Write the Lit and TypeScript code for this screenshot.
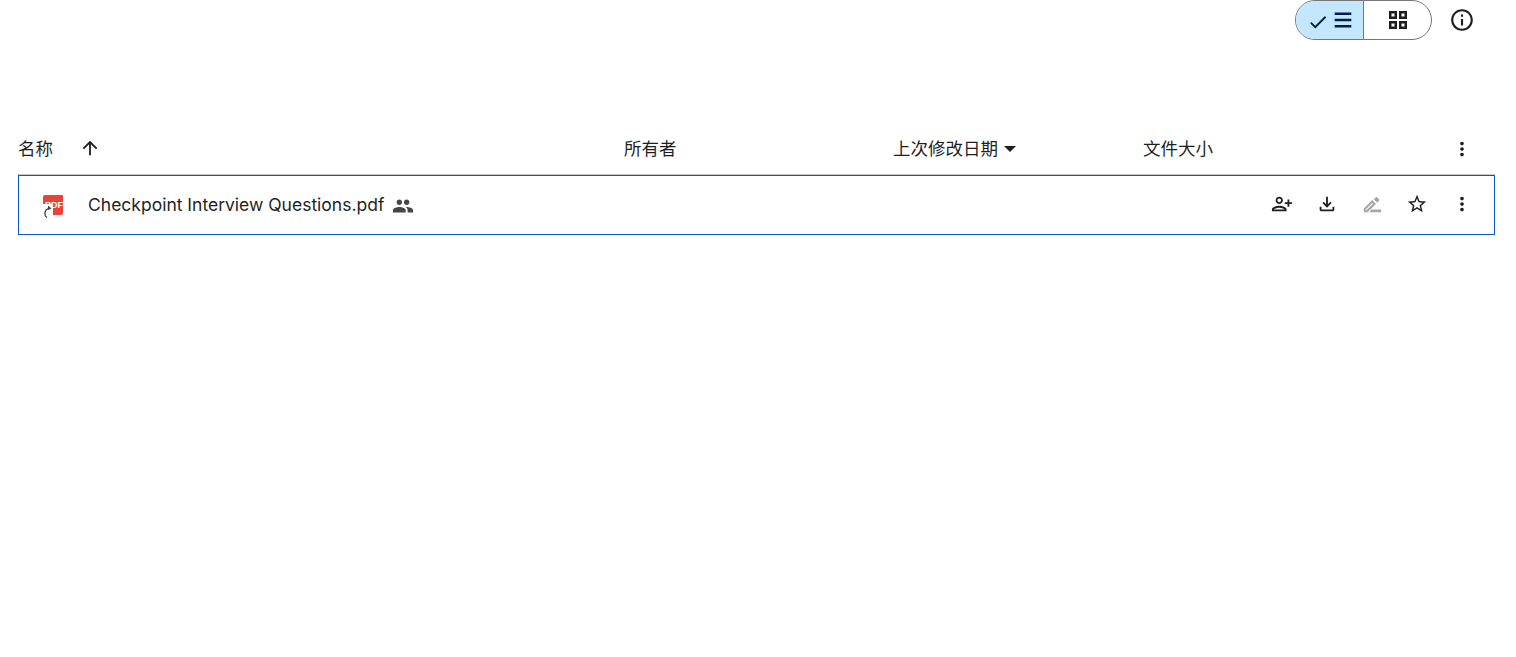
import { LitElement, html, css, svg } from "lit";
import { customElement } from "lit/decorators.js";

const P = {
  check: "M9 16.17L4.83 12l-1.42 1.41L9 19 21 7l-1.41-1.41z",
  grid: "M3 3h8v8H3zm2.500 2.500v3h3v-3zM13 3h8v8h-8zm2.500 2.500v3h3v-3zM3 13h8v8H3zm2.500 2.500v3h3v-3zM13 13h8v8h-8zm2.500 2.500v3h3v-3z",
  info: "M11 7h2v2h-2zm0 4h2v6h-2zm1-9C6.48 2 2 6.48 2 12s4.48 10 10 10 10-4.48 10-10S17.52 2 12 2zm0 18c-4.41 0-8-3.59-8-8s3.59-8 8-8 8 3.59 8 8-3.59 8-8 8z",
  up: "M4 12l1.41 1.41L11 7.83V20h2V7.83l5.58 5.59L20 12l-8-8-8 8z",
  more: "M12 8c1.1 0 2-.9 2-2s-.9-2-2-2-2 .9-2 2 .9 2 2 2zm0 2c-1.1 0-2 .9-2 2s.9 2 2 2 2-.9 2-2-.9-2-2-2zm0 6c-1.1 0-2 .9-2 2s.9 2 2 2 2-.9 2-2-.9-2-2-2z",
  people: "M16 11c1.66 0 2.99-1.34 2.99-3S17.66 5 16 5c-1.66 0-3 1.34-3 3s1.34 3 3 3zm-8 0c1.66 0 2.99-1.34 2.99-3S9.66 5 8 5C6.34 5 5 6.34 5 8s1.34 3 3 3zm0 2c-2.33 0-7 1.17-7 3.5V19h14v-2.5c0-2.33-4.67-3.5-7-3.5zm8 0c-.29 0-.62.02-.97.05 1.16.84 1.97 1.97 1.97 3.45V19h6v-2.5c0-2.33-4.67-3.5-7-3.5z",
  add: "M15 12c2.21 0 4-1.79 4-4s-1.79-4-4-4-4 1.79-4 4 1.79 4 4 4zm0-6c1.1 0 2 .9 2 2s-.9 2-2 2-2-.9-2-2 .9-2 2-2zm0 8c-2.67 0-8 1.34-8 4v2h16v-2c0-2.66-5.33-4-8-4zm-6 4c.22-.72 3.31-2 6-2 2.7 0 5.8 1.29 6 2H9zm-3-3v-3h3v-2H6V7H4v3H1v2h3v3h2z",
  download: "M18 15v3H6v-3H4v3c0 1.1.9 2 2 2h12c1.1 0 2-.9 2-2v-3h-2zm-1-4l-1.41-1.41L13 12.17V4h-2v8.17L8.41 9.59 7 11l5 5 5-5z",
  edit: "M3 16.800V21h4.200L16.300 11.900l-4.200-4.200L3 16.800zM5.800 18.800H5.200v-.9l6.900-6.900.9.9-7.200 6.900zM17.700 10.500l1.800-1.800a1.500 1.500 0 000-2.100l-1.600-1.600a1.500 1.500 0 00-2.100 0l-1.800 1.800zM11.500 18H22v3H9z",
  star: "M22 9.24l-7.19-.62L12 2 9.19 8.63 2 9.24l5.46 4.73L5.82 21 12 17.27 18.18 21l-1.63-7.03L22 9.24zM12 15.4l-3.76 2.27 1-4.28-3.32-2.88 4.38-.38L12 6.1l1.71 4.04 4.38.38-3.32 2.88 1 4.28L12 15.4z",
  menu: "M2 3h20v3H2zM2 10.500h20v3H2zM2 18h20v3H2z",
};

const icon = (d: string, size: number, cls = "") =>
  html`<svg class=${cls} width=${size} height=${size} viewBox="0 0 24 24" fill="currentColor">${svg`<path d=${d}></path>`}</svg>`;

@customElement("app-root")
export class AppRoot extends LitElement {
  static styles = css`
    :host {
      display: block;
      width: 1516px;
      height: 657px;
      background: #fff;
      color: #1f1f1f;
      font-family: Inter, "Noto Sans CJK SC", sans-serif;
      overflow: hidden;
    }
    .toolbar {
      display: flex;
      justify-content: flex-end;
      align-items: flex-start;
      height: 126px;
      padding-right: 41px;
      box-sizing: border-box;
    }
    .seg {
      display: flex;
      width: 137px;
      height: 40px;
      box-sizing: border-box;
      border: 1px solid #747775;
      border-radius: 20px;
      overflow: hidden;
    }
    .seg div {
      display: flex;
      align-items: center;
      justify-content: center;
      color: #041e49;
    }
    .seg .on {
      width: 68px;
      gap: 4px;
      box-sizing: border-box;
      background: #c2e7ff;
      border-right: 1px solid #747775;
    }
    .seg .off {
      flex: 1;
      color: #1f1f1f;
    }
    .tick {
      margin-top: 4px;
    }
    .info {
      margin-left: 17px;
      width: 26px;
      height: 26px;
      margin-top: 7px;
    }
    .head {
      display: grid;
      grid-template-columns: 606px 269px 250px 1fr auto;
      align-items: center;
      margin: 0 21px 0 18px;
      height: 49px;
      font-size: 17.500px;
      font-weight: 400;
      border-bottom: 1px solid #c7c7c7;
      padding: 0 22px 5px 0;
      box-sizing: border-box;
    }
    .cell {
      display: flex;
      align-items: center;
    }
    .sort {
      margin-left: 26px;
    }
    .caret {
      margin-left: 6px;
      margin-top: 2px;
      width: 0;
      height: 0;
      border-left: 6.500px solid transparent;
      border-right: 6.500px solid transparent;
      border-top: 6.500px solid #1f1f1f;
    }
    .headmore {
      margin-top: 2px;
    }
    .row {
      display: flex;
      align-items: center;
      margin: 0 21px 0 18px;
      height: 60px;
      box-sizing: border-box;
      border: 1px solid #0b57d0;
      padding: 0 21px 2px 23px;
    }
    .file {
      flex: 1;
      display: flex;
      align-items: center;
    }
    .name {
      margin-left: 24px;
      font-size: 17.500px;
      font-weight: 400;
    }
    .shared {
      margin-left: 8px;
      margin-top: 3px;
      color: #444746;
    }
    .acts {
      display: flex;
      gap: 23px;
    }
    .acts svg {
      display: block;
    }
    .flip {
      transform: scaleX(-1);
    }
    .dim {
      color: #a8a8a8;
    }
    .pdf {
      display: block;
      flex: none;
      margin-top: 2px;
    }
    .pdf text {
      font: 700 9px "Liberation Sans", sans-serif;
      fill: #fff;
    }
  `;

  render() {
    return html`
      <div class="toolbar">
        <div class="seg">
          <div class="on">${icon(P.check, 22, "tick")}${icon(P.menu, 20)}</div>
          <div class="off">${icon(P.grid, 24)}</div>
        </div>
        <div class="info">${icon(P.info, 26)}</div>
      </div>
      <div class="head">
        <div class="cell">名称${icon(P.up, 22, "sort")}</div>
        <div class="cell">所有者</div>
        <div class="cell">上次修改日期<span class="caret"></span></div>
        <div class="cell">文件大小</div>
        ${icon(P.more, 22, "headmore")}
      </div>
      <div class="row">
        <div class="file">
          <svg class="pdf" width="22" height="26" viewBox="0 0 22 26">
            <path d="M3 3h18v18a2 2 0 0 1-2 2H3a2 2 0 0 1-2-2V5a2 2 0 0 1 2-2z" fill="#ea4335"></path>
            <text x="3" y="16">PDF</text>
            <path d="M1 12h7c2 0 3 1 3 3V26H1z" fill="#fff"></path>
            <path d="M5 25.500c-3-1.500-3-7.500 1.500-9" fill="none" stroke="#3c4043" stroke-width="1.300"></path>
            <path d="M6 13.500l3.500 3-3.500 1.500z" fill="#3c4043"></path>
          </svg>
          <span class="name">Checkpoint Interview Questions.pdf</span>
          ${icon(P.people, 22, "shared")}
        </div>
        <div class="acts">
          ${icon(P.add, 22, "flip")}${icon(P.download, 22)}${icon(P.edit, 22, "dim")}${icon(P.star, 22)}${icon(P.more, 22)}
        </div>
      </div>
    `;
  }
}
